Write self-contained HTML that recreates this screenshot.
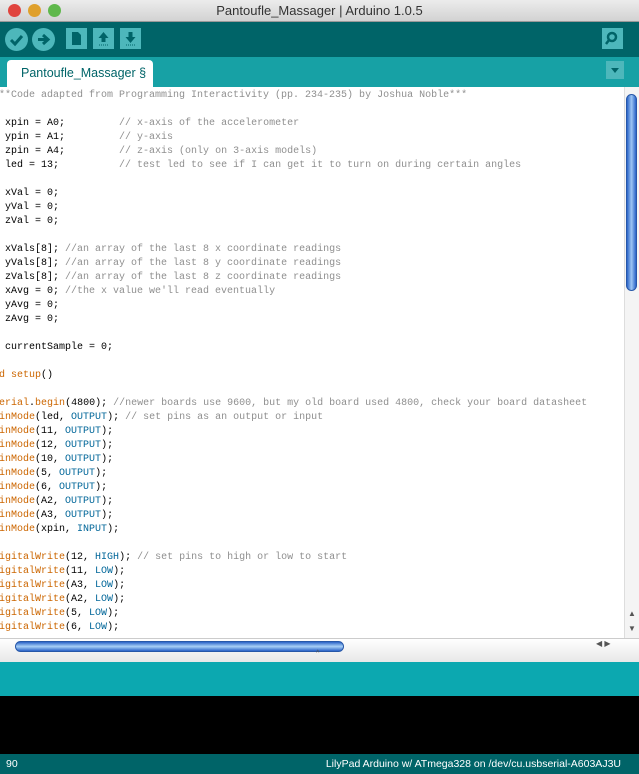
<!DOCTYPE html>
<html><head><meta charset="utf-8"><style>
*{margin:0;padding:0;box-sizing:border-box}
body{width:639px;height:774px;overflow:hidden;position:relative;background:#fff;font-family:"Liberation Sans",sans-serif}
#title{position:absolute;left:0;top:0;width:639px;height:22px;background:linear-gradient(#ececec,#d2d2d2);border-bottom:1px solid #999;text-align:center;font-size:13px;line-height:22px;color:#333}
.dot{position:absolute;top:4px;width:13px;height:13px;border-radius:50%}
#tool{position:absolute;left:0;top:22px;width:639px;height:35px;background:#006468}
.cb{position:absolute;top:6px;width:23px;height:23px;border-radius:50%;background:#4db7bb}
.sb{position:absolute;top:6px;width:21px;height:21px;background:#4db7bb}
#tabs{position:absolute;left:0;top:57px;width:639px;height:30px;background:#17a1a5}
#tab{position:absolute;left:7px;top:3px;width:146px;height:28px;background:#fff;border-radius:4px 4px 0 0;color:#006468;font-size:12.5px;line-height:27px;padding-left:14px}
#ed{position:absolute;left:0;top:87px;width:624px;height:551px;overflow:hidden;background:#fff}
pre{position:absolute;left:-19px;top:2px;font-family:"Liberation Mono",monospace;font-size:10px;line-height:14px;color:#000}
.c{color:#8f8f8f}.k{color:#cc6600}.b{color:#006699}
#vs{position:absolute;left:624px;top:87px;width:15px;height:551px;background:#f4f4f4;border-left:1px solid #ddd}
#hs{position:absolute;left:0;top:638px;width:639px;height:24px;background:linear-gradient(#fff,#e8e8e8);border-top:1px solid #ccc}
#msg{position:absolute;left:0;top:662px;width:639px;height:34px;background:#0ca8b0}
#con{position:absolute;left:0;top:696px;width:639px;height:58px;background:#000}
#st{position:absolute;left:0;top:754px;width:639px;height:20px;background:#006468;color:#fff;font-size:10.5px;line-height:20px}
</style></head><body>
<div id="title">
<div class="dot" style="left:8px;background:#e0443e"></div>
<div class="dot" style="left:28px;background:#dfa02c"></div>
<div class="dot" style="left:48px;background:#5fb84c"></div>
Pantoufle_Massager | Arduino 1.0.5</div>
<div id="tool">
<div class="cb" style="left:5px"><svg width="23" height="23"><path d="M6 12l4 4 7-8" stroke="#006468" stroke-width="3" fill="none"/></svg></div>
<div class="cb" style="left:32px"><svg width="23" height="23"><path d="M6 11.5h8M11 7l5 4.5-5 4.5" stroke="#006468" stroke-width="3" fill="none"/></svg></div>
<div class="sb" style="left:66px"><svg width="21" height="21"><path d="M6 4h6l3 3v10H6z" fill="#006468"/></svg></div>
<div class="sb" style="left:93px"><svg width="21" height="21"><path d="M10.5 4l5 6h-3v4h-4v-4h-3z" fill="#006468"/><path d="M6 17h9" stroke="#006468" stroke-dasharray="1 1"/></svg></div>
<div class="sb" style="left:120px"><svg width="21" height="21"><path d="M10.5 15l5-6h-3V4h-4v5h-3z" fill="#006468"/><path d="M6 17h9" stroke="#006468" stroke-dasharray="1 1"/></svg></div>
<div class="sb" style="left:602px"><svg width="21" height="21"><circle cx="10" cy="9" r="4" stroke="#006468" stroke-width="2.5" fill="none"/><path d="M7 12l-3 4" stroke="#006468" stroke-width="2.5"/></svg></div>
</div>
<div id="tabs"><div id="tab">Pantoufle_Massager §</div>
<div style="position:absolute;left:606px;top:4px;width:18px;height:18px;background:#4db7bb"><svg width="18" height="18"><path d="M5 7h8l-4 5z" fill="#006468"/></svg></div></div>
<div id="ed"><pre><span class="c">/****Code adapted from Programming Interactivity (pp. 234-235) by Joshua Noble***</span>

<span class="k">int</span> xpin = A0;         <span class="c">// x-axis of the accelerometer</span>
<span class="k">int</span> ypin = A1;         <span class="c">// y-axis</span>
<span class="k">int</span> zpin = A4;         <span class="c">// z-axis (only on 3-axis models)</span>
<span class="k">int</span> led = 13;          <span class="c">// test led to see if I can get it to turn on during certain angles</span>

<span class="k">int</span> xVal = 0;
<span class="k">int</span> yVal = 0;
<span class="k">int</span> zVal = 0;

<span class="k">int</span> xVals[8]; <span class="c">//an array of the last 8 x coordinate readings</span>
<span class="k">int</span> yVals[8]; <span class="c">//an array of the last 8 y coordinate readings</span>
<span class="k">int</span> zVals[8]; <span class="c">//an array of the last 8 z coordinate readings</span>
<span class="k">int</span> xAvg = 0; <span class="c">//the x value we'll read eventually</span>
<span class="k">int</span> yAvg = 0;
<span class="k">int</span> zAvg = 0;

<span class="k">int</span> currentSample = 0;

<span class="k">void</span> <span class="k">setup</span>()
{
  <span class="k">Serial</span>.<span class="k">begin</span>(4800); <span class="c">//newer boards use 9600, but my old board used 4800, check your board datasheet</span>
  <span class="k">pinMode</span>(led, <span class="b">OUTPUT</span>); <span class="c">// set pins as an output or input</span>
  <span class="k">pinMode</span>(11, <span class="b">OUTPUT</span>);
  <span class="k">pinMode</span>(12, <span class="b">OUTPUT</span>);
  <span class="k">pinMode</span>(10, <span class="b">OUTPUT</span>);
  <span class="k">pinMode</span>(5, <span class="b">OUTPUT</span>);
  <span class="k">pinMode</span>(6, <span class="b">OUTPUT</span>);
  <span class="k">pinMode</span>(A2, <span class="b">OUTPUT</span>);
  <span class="k">pinMode</span>(A3, <span class="b">OUTPUT</span>);
  <span class="k">pinMode</span>(xpin, <span class="b">INPUT</span>);

  <span class="k">digitalWrite</span>(12, <span class="b">HIGH</span>); <span class="c">// set pins to high or low to start</span>
  <span class="k">digitalWrite</span>(11, <span class="b">LOW</span>);
  <span class="k">digitalWrite</span>(A3, <span class="b">LOW</span>);
  <span class="k">digitalWrite</span>(A2, <span class="b">LOW</span>);
  <span class="k">digitalWrite</span>(5, <span class="b">LOW</span>);
  <span class="k">digitalWrite</span>(6, <span class="b">LOW</span>);
</pre></div>
<div id="vs"><div style="position:absolute;left:1px;top:7px;width:11px;height:197px;border-radius:6px;background:linear-gradient(90deg,#2a63c8,#9cc6f4,#2a63c8);border:1px solid #2657a8"></div>
<div style="position:absolute;left:3px;top:522px;font-size:8px;color:#555">▲</div>
<div style="position:absolute;left:3px;top:537px;font-size:8px;color:#555">▼</div></div>
<div id="hs"><div style="position:absolute;left:15px;top:2px;width:329px;height:11px;border-radius:6px;background:linear-gradient(#2a63c8,#a8d0f6,#2a63c8);border:1px solid #2657a8"></div>
<div style="position:absolute;left:596px;top:0px;font-size:8px;color:#555">◀ ▶</div>
<div style="position:absolute;left:316px;top:11px;font-size:7px;color:#555">^</div></div>
<div id="msg"></div>
<div id="con"></div>
<div id="st"><span style="position:absolute;left:6px">90</span><span style="position:absolute;right:18px">LilyPad Arduino w/ ATmega328 on /dev/cu.usbserial-A603AJ3U</span></div>
</body></html>
